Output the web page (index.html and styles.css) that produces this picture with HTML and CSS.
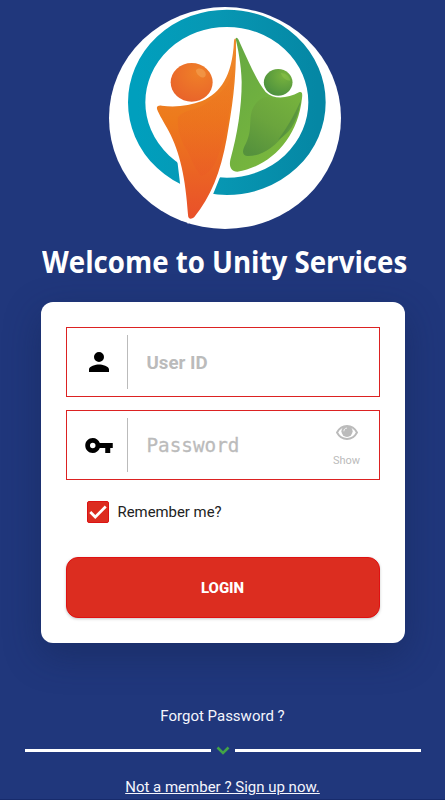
FILE: index.html
```html
<!DOCTYPE html>
<html lang="en">
<head>
  <meta charset="UTF-8" />
  <title>Unity Services – Login</title>
  <meta name="viewport" content="width=device-width, initial-scale=1.0" />
  <link rel="stylesheet" href="styles.css">
</head>
<body>
  <main class="page">
    <!-- Logo -->
    <svg class="logo" viewBox="26 20 696 666" role="img" aria-label="Unity Services">
      <defs>
        <linearGradient id="ring" x1="0" x2="1">
          <stop offset="0" stop-color="#009fbd" />
          <stop offset="0.45" stop-color="#0797b3" />
          <stop offset="1" stop-color="#0587a4" />
        </linearGradient>
        <linearGradient id="orange" x1="0" y1="0" x2="0" y2="1">
          <stop offset="0" stop-color="#ef8a2d" />
          <stop offset="0.45" stop-color="#ed7a1c" />
          <stop offset="1" stop-color="#e9502a" />
        </linearGradient>
        <linearGradient id="fold" x1="0" y1="0" x2="0" y2="1">
          <stop offset="0" stop-color="#ee7b1d" />
          <stop offset="1" stop-color="#ea5a25" />
        </linearGradient>
        <radialGradient id="head" cx="0.65" cy="0.25" r="0.8">
          <stop offset="0" stop-color="#ef8028" />
          <stop offset="1" stop-color="#e9632a" />
        </radialGradient>
        <linearGradient id="green" x1="0" y1="0" x2="0.7" y2="1">
          <stop offset="0" stop-color="#64a843" />
          <stop offset="1" stop-color="#7bb83c" />
        </linearGradient>
        <linearGradient id="shade" x1="0.8" y1="0" x2="0.25" y2="1">
          <stop offset="0" stop-color="#75b13d" />
          <stop offset="0.5" stop-color="#69a23d" />
          <stop offset="1" stop-color="#508c3c" />
        </linearGradient>
        <radialGradient id="greenHead" cx="0.7" cy="0.25" r="0.8">
          <stop offset="0" stop-color="#78b33d" />
          <stop offset="1" stop-color="#4d913e" />
        </radialGradient>
      </defs>
      <ellipse cx="374" cy="353" rx="348" ry="333" fill="#fff" />
      <ellipse cx="379.500" cy="306" rx="270.500" ry="252" fill="none" stroke="url(#ring)" stroke-width="52" />
      <path d="M222 455L232 490L241 565L262 670L310 650L337 585L358 533L376 500L330 440Z" fill="#fff" />
      <path d="M170 326C168 318 174 315 184 316C226 322 268 316 305 302C360 278 396 228 401 122C403 112 407 113 407 122C409 240 394 330 379 415C361 515 331 590 282 650C272 659 263 656 263 643C256 535 239 456 205 392C191 366 176 343 170 326Z" fill="url(#orange)" />
      <path d="M232 352C248 326 292 332 323 304C366 279 389 250 399 205C401 288 378 410 349 478C337 506 320 522 302 527C277 500 269 459 250 435C237 408 231 380 232 352Z" fill="url(#fold)" opacity="0.4" />
      <ellipse cx="274" cy="246" rx="63" ry="58" fill="url(#head)" />
      <path d="M287 209C292 201 309 203 315 216C320 230 309 237 297 227C290 222 286 215 287 209Z" fill="#f3a052" opacity="0.65" />
      <path d="M406 115C410 108 414 116 420 130C448 191 468 239 496 275C522 300 562 294 596 276C605 273 607 279 605 294C592 414 512 498 411 514C391 514 386 498 390 478C411 404 424 322 424 245C423 190 412 142 406 115Z" fill="url(#green)" />
      <path d="M600 282C602 310 584 359 558 394C524 441 482 469 440 467C424 465 425 450 437 429C461 380 438 345 467 309C489 283 506 290 521 294C549 298 573 292 600 282Z" fill="url(#shade)" opacity="0.85" />
      <path d="M602 298C592 362 571 396 533 419C561 380 582 346 602 298Z" fill="#4b8740" opacity="0.6" />
      <ellipse cx="533.500" cy="246" rx="43" ry="40" fill="url(#greenHead)" />
      <path d="M541 218C555 217 568 227 570 241C553 240 546 231 541 218Z" fill="#8bc34c" opacity="0.5" />
    </svg>

    <h1 class="title">Welcome to Unity Services</h1>

    <!-- Login form -->
    <form class="card" onsubmit="return false">
      <div class="field">
        <span class="field-icon">
          <svg class="user-icon" viewBox="4 4 16 16"><path d="M12 12a4 4 0 1 0 0-8 4 4 0 0 0 0 8zm0 2c-2.670 0-8 1.340-8 4v2h16v-2c0-2.660-5.330-4-8-4z" /></svg>
        </span>
        <input class="user-input" type="text" placeholder="User ID" aria-label="User ID" />
      </div>

      <div class="field">
        <span class="field-icon">
          <svg class="key-icon" viewBox="1 6 22 12"><path d="M12.650 10C11.830 7.670 9.610 6 7 6c-3.310 0-6 2.690-6 6s2.690 6 6 6c2.610 0 4.830-1.670 5.650-4H17v4h4v-4h2v-4H12.650zM7 14.200a2.200 2.200 0 1 1 0-4.400 2.200 2.200 0 0 1 0 4.400z" /></svg>
        </span>
        <input class="password-input" type="password" placeholder="Password" aria-label="Password" />
        <button class="show" type="button">
          <svg class="eye-icon" viewBox="0 0 22 15">
            <path d="M1 7.500C3.300 3.200 6.900 1 11 1s7.700 2.200 10 6.500C18.700 11.800 15.100 14 11 14S3.300 11.800 1 7.500z" fill="none" stroke="#bbb" stroke-width="1.900" />
            <circle cx="11" cy="6.300" r="5.600" fill="#bbb" />
            <path d="M7.900 5.900c0-1.600 1.100-2.700 2.700-2.800" fill="none" stroke="#fff" stroke-width="0.800" stroke-linecap="round" />
          </svg>
          <span>Show</span>
        </button>
      </div>

      <label class="remember">
        <input type="checkbox" checked />
        <span class="check">
          <svg viewBox="0 0 22 22"><path d="M2.500 11L8 16.500L19.500 5" /></svg>
        </span>
        <span>Remember me?</span>
      </label>

      <button class="login" type="submit">LOGIN</button>
    </form>

    <!-- Footer links -->
    <a class="forgot">Forgot Password ?</a>
    <div class="divider">
      <svg viewBox="0 0 14 9"><path d="M1.500 1.500L7 7L12.500 1.500" /></svg>
    </div>
    <a class="signup">Not a member ? Sign up now.</a>
  </main>
</body>
</html>
```

FILE: styles.css
```css
* { box-sizing: border-box; }
body { margin: 0; background: #20377c; font-family: Roboto, sans-serif; }
.page { display: flex; flex-direction: column; align-items: center; height: 800px; padding-top: 7px; overflow: hidden; border-bottom: 1px solid #172b6c; }
.logo { width: 232px; height: 222px; margin-left: 4px; flex: none; }
.title { margin: 12px 0 0 4px; height: 42px; line-height: 42px; color: #fff; font-family: "Open Sans", "Noto Sans", sans-serif; font-size: 29.5px; font-weight: 700; white-space: nowrap; transform: scaleX(0.938); }

.card { width: 364px; height: 341px; margin-top: 19px; padding: 25px; flex: none; background: #fff; border-radius: 12px; box-shadow: 0 12px 36px rgba(20, 35, 80, 0.45); }
.field { display: flex; align-items: center; width: 314px; height: 70px; margin-bottom: 13px; border: 1px solid #dc2222; }
.field-icon { display: flex; align-items: center; justify-content: center; width: 61px; height: 54px; padding-left: 4px; border-right: 1px solid #bbb; }
.user-icon { width: 20px; height: 20px; }
.key-icon { width: 28px; height: 15px; }
.field input { flex: 1; min-width: 0; height: 60px; padding: 0 0 0 19px; border: 0; outline: 0; background: none; }
.field input::placeholder { color: #bbb; opacity: 1; }
.field .user-input { padding-top: 1px; font: 700 18.7px Roboto, sans-serif; }
.field .password-input { font: 19.3px "DejaVu Sans Mono", monospace; -webkit-text-stroke: 0.3px #bbb; }
.show { display: flex; flex-direction: column; align-items: center; gap: 14px; width: 64px; padding: 1px 0 0; border: 0; background: none; color: #bbb; font: 11px/13px Roboto, sans-serif; }
.eye-icon { width: 22px; height: 15px; overflow: visible; }

.remember { display: flex; align-items: center; gap: 9px; width: max-content; margin: 20px 0 34px 21px; height: 23px; color: #222; font-size: 14.9px; }
.remember input { position: absolute; opacity: 0; }
.check { width: 22px; height: 22px; background: #dc2d20; border: 1px solid #dc1313; border-radius: 2px; }
.check svg { display: block; width: 20px; height: 20px; fill: none; stroke: #fff; stroke-width: 3; }
.login { display: block; width: 314px; height: 61px; border: 1px solid #e01111; border-radius: 12px; background: #dc2d20; color: #fff; font: 800 15px Roboto, sans-serif; box-shadow: 0 1px 3px rgba(0, 0, 0, 0.22); }

.forgot, .signup { color: #f4f5fc; font-size: 15px; line-height: 20px; }
.forgot { margin-top: 63px; }
.divider { display: flex; align-items: center; gap: 5px; width: 396px; height: 9px; margin-top: 20px; }
.divider::before, .divider::after { content: ""; flex: 1; height: 3px; background: #fff; }
.divider svg { width: 14px; height: 9px; fill: none; stroke: #43a447; stroke-width: 2.5; }
.signup { margin-top: 22px; text-decoration: underline; }
```
